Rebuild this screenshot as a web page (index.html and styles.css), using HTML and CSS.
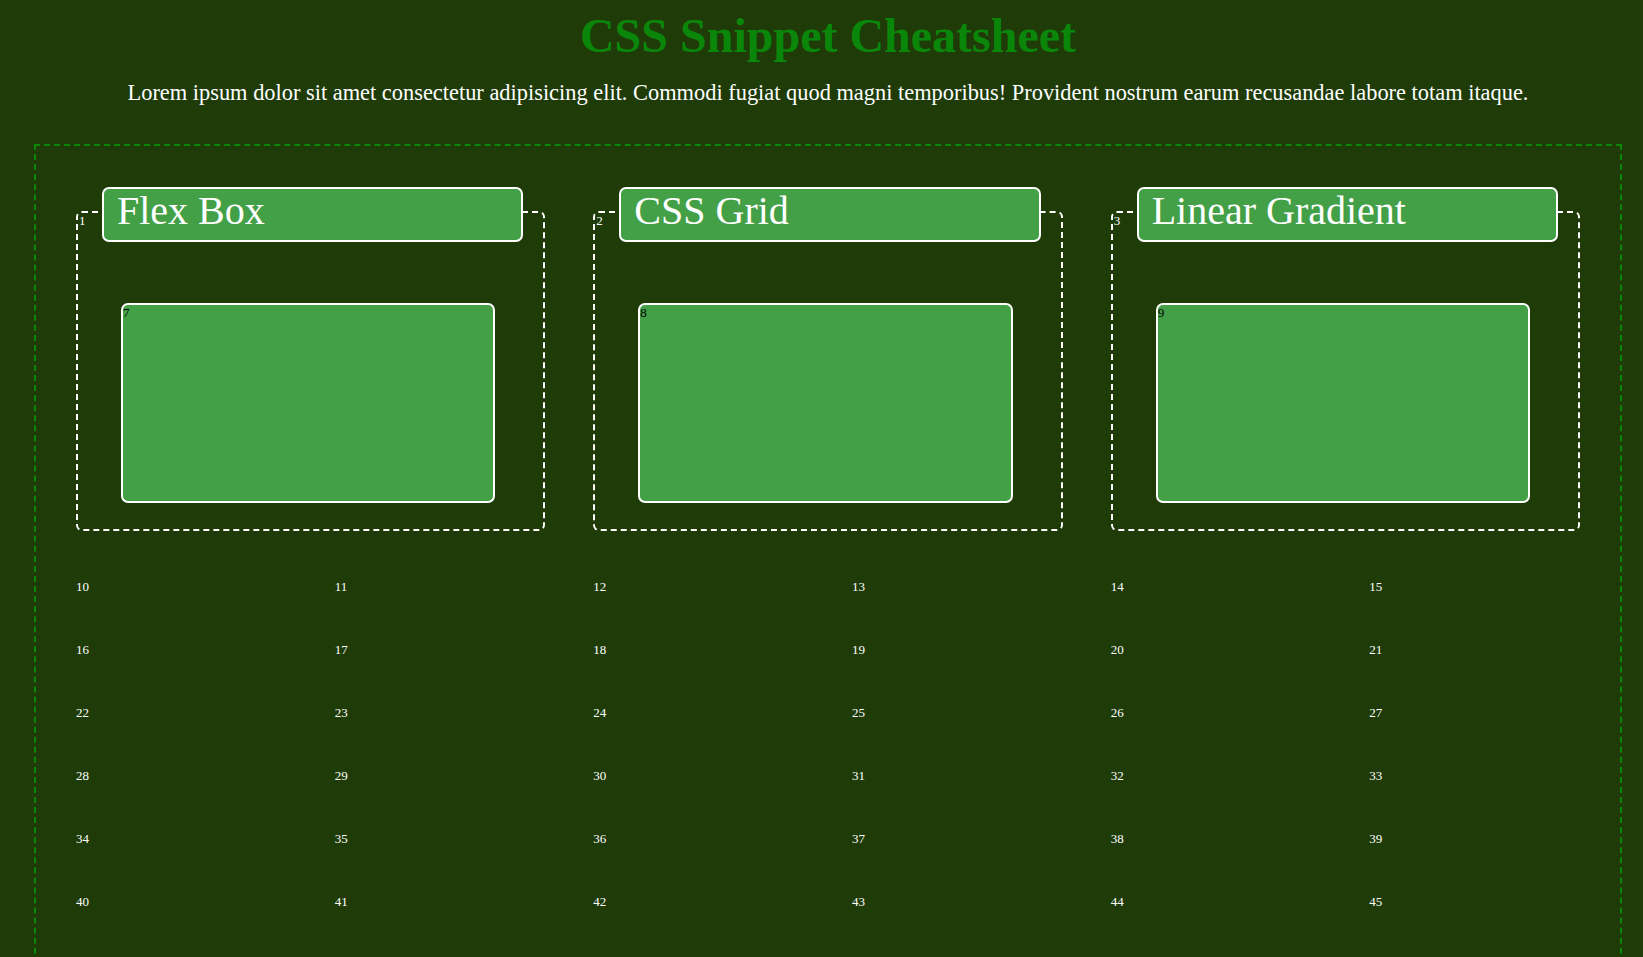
FILE: index.html
```html
<!DOCTYPE html>
<html lang="en">
<head>
<meta charset="utf-8">
<title>CSS Snippet Cheatsheet</title>
<link rel="stylesheet" href="styles.css">
</head>
<body>
<h1 class="title">CSS Snippet Cheatsheet</h1>
<p class="intro">Lorem ipsum dolor sit amet consectetur adipisicing elit. Commodi fugiat quod magni temporibus! Provident nostrum earum recusandae labore totam itaque.</p>
<main class="sheet">
  <section class="card">
    <span class="card-num">1</span>
    <h2 class="card-title">Flex Box</h2>
    <div class="demo">7</div>
  </section>
  <section class="card">
    <span class="card-num">2</span>
    <h2 class="card-title">CSS Grid</h2>
    <div class="demo">8</div>
  </section>
  <section class="card">
    <span class="card-num">3</span>
    <h2 class="card-title">Linear Gradient</h2>
    <div class="demo">9</div>
  </section>
  <div class="cell">10</div><div class="cell">11</div><div class="cell">12</div><div class="cell">13</div><div class="cell">14</div><div class="cell">15</div>
  <div class="cell">16</div><div class="cell">17</div><div class="cell">18</div><div class="cell">19</div><div class="cell">20</div><div class="cell">21</div>
  <div class="cell">22</div><div class="cell">23</div><div class="cell">24</div><div class="cell">25</div><div class="cell">26</div><div class="cell">27</div>
  <div class="cell">28</div><div class="cell">29</div><div class="cell">30</div><div class="cell">31</div><div class="cell">32</div><div class="cell">33</div>
  <div class="cell">34</div><div class="cell">35</div><div class="cell">36</div><div class="cell">37</div><div class="cell">38</div><div class="cell">39</div>
  <div class="cell">40</div><div class="cell">41</div><div class="cell">42</div><div class="cell">43</div><div class="cell">44</div><div class="cell">45</div>
  <div class="cell">46</div><div class="cell">47</div><div class="cell">48</div><div class="cell">49</div><div class="cell">50</div><div class="cell">51</div>
</main>
</body>
</html>
```
FILE: styles.css
```css
html {
  background: #1e3b08;
}

body {
  margin: 0;
  padding: 8px 0 0 13px;
  font-family: "Liberation Serif", "Times New Roman", serif;
  color: #ffffff;
  background: #1e3b08;
}

.title {
  margin: 0;
  font-size: 48px;
  font-weight: bold;
  text-align: center;
  color: #0a870a;
}

.intro {
  margin: 17px 0 38px;
  font-size: 22.4px;
  text-align: center;
  color: #ffffff;
}

.sheet {
  display: grid;
  grid-template-columns: repeat(6, 1fr);
  gap: 48px;
  margin: 0 21px;
  padding: 41px 40px 40px;
  border: 2px dashed #0a870a;
}

.card {
  grid-column: span 2;
  position: relative;
  margin-top: 24px;
  border: 2px dashed #ffffff;
  border-radius: 6px;
}

.card-num {
  position: absolute;
  top: 0;
  left: 1px;
  font-size: 13px;
  line-height: 15px;
  color: #ffffff;
}

.card-title {
  margin: -26px 20px 0 24px;
  height: 44px;
  padding: 0 13px 7px;
  line-height: 44px;
  font-size: 40px;
  font-weight: normal;
  color: #ffffff;
  background: #43a047;
  border: 2px solid #ffffff;
  border-radius: 7px;
}

.demo {
  height: 196px;
  margin: 61px 48px 26px 43px;
  font-size: 13px;
  line-height: 15px;
  color: #000000;
  background: #43a047;
  border: 2px solid #ffffff;
  border-radius: 7px;
}

.cell {
  font-size: 13px;
  line-height: 15px;
  color: #ffffff;
}
```
